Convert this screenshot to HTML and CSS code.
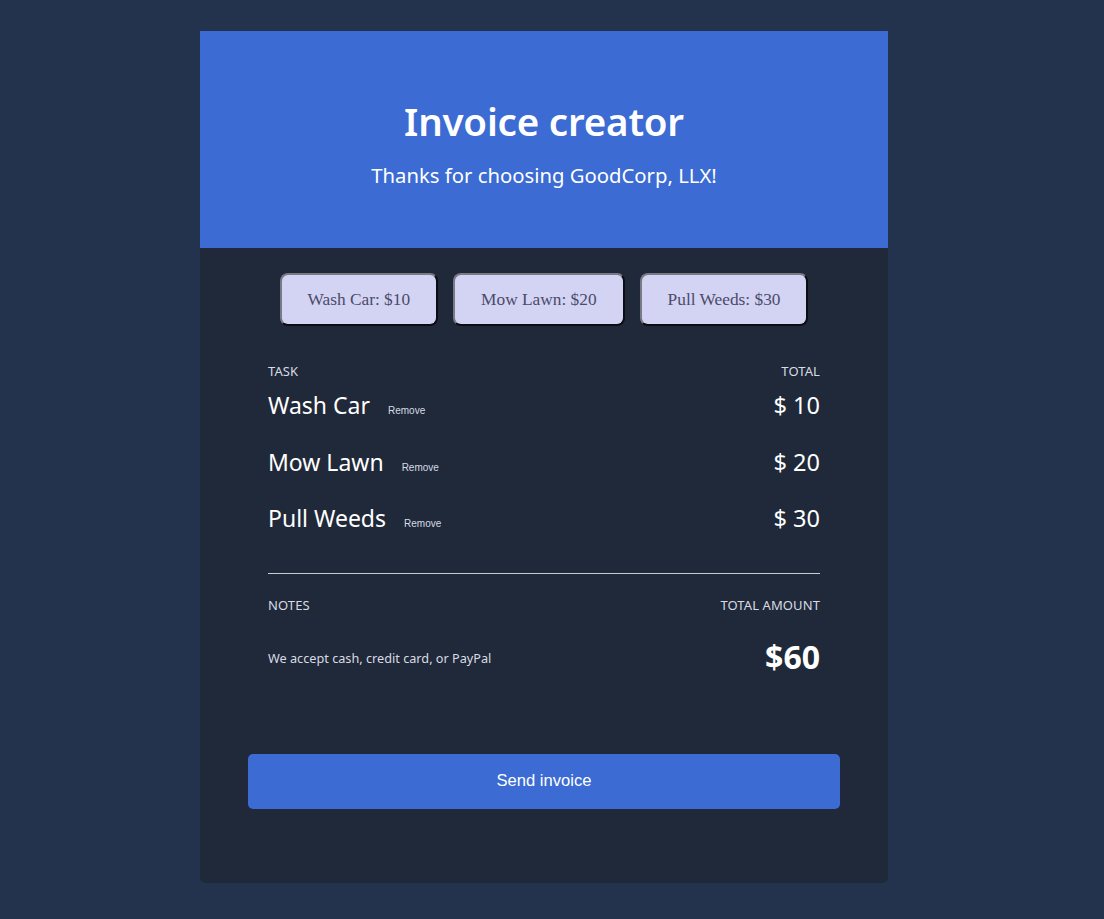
FILE: index.html
```html
<!DOCTYPE html>
<html>
<head>
<meta charset="utf-8">
<link rel="stylesheet" href="styles.css">
</head>
<body>
<div class="card">
  <header class="hero">
    <h1 class="title">Invoice creator</h1>
    <p class="subtitle">Thanks for choosing GoodCorp, LLX!</p>
  </header>
  <main class="content">
    <div class="services">
      <button class="service">Wash Car: $10</button>
      <button class="service">Mow Lawn: $20</button>
      <button class="service">Pull Weeds: $30</button>
    </div>
    <div class="table">
      <div class="head-row">
        <span class="label">TASK</span>
        <span class="label">TOTAL</span>
      </div>
      <div class="items">
        <div class="item">
          <div class="item-name"><span class="task">Wash Car</span><span class="remove">Remove</span></div>
          <span class="price">$ 10</span>
        </div>
        <div class="item">
          <div class="item-name"><span class="task">Mow Lawn</span><span class="remove">Remove</span></div>
          <span class="price">$ 20</span>
        </div>
        <div class="item">
          <div class="item-name"><span class="task">Pull Weeds</span><span class="remove">Remove</span></div>
          <span class="price">$ 30</span>
        </div>
      </div>
      <hr class="divider">
      <div class="summary">
        <div class="summary-col">
          <span class="label">NOTES</span>
          <span class="notes">We accept cash, credit card, or PayPal</span>
        </div>
        <div class="summary-col right">
          <span class="label">TOTAL AMOUNT</span>
          <span class="amount">$60</span>
        </div>
      </div>
    </div>
    <button class="send">Send invoice</button>
  </main>
</div>
</body>
</html>
```
FILE: styles.css
```css
html, body {
  margin: 0;
  padding: 0;
}
body {
  background: #23334d;
  font-family: "Noto Sans", "Open Sans", sans-serif;
  color: #ffffff;
  padding: 31px 16px 0 0;
  min-height: 919px;
  box-sizing: border-box;
}
.card {
  width: 688px;
  margin: 0 auto;
  background: #202939;
  border-radius: 0 0 6px 6px;
  overflow: hidden;
}
.hero {
  background: #3b6bd3;
  height: 217px;
  box-sizing: border-box;
  padding-top: 63px;
  text-align: center;
}
.title {
  margin: 0;
  font-size: 38.5px;
  font-weight: 600;
  line-height: 54px;
  letter-spacing: -0.2px;
}
.subtitle {
  margin: 13px 0 0;
  font-size: 20.3px;
  line-height: 28px;
}
.content {
  padding: 25px 48px 74px;
}
.services {
  display: flex;
  justify-content: center;
  gap: 15px;
}
.service {
  font-family: "Liberation Serif", "Times New Roman", serif;
  font-size: 17.33px;
  color: #4b4b6a;
  background: #d3d3f3;
  border: 2px solid;
  border-color: #7a7a86 #0c0c12 #0c0c12 #7a7a86;
  border-radius: 8px;
  height: 53px;
  padding: 0 26px;
}
.table {
  margin: 37px 20px 0;
}
.head-row {
  display: flex;
  justify-content: space-between;
}
.label {
  font-size: 13px;
  color: #d8dbe4;
  line-height: 16px;
  letter-spacing: 0.1px;
}
.items {
  margin-top: 8px;
}
.item {
  display: flex;
  justify-content: space-between;
  align-items: baseline;
  height: 56.5px;
}
.item-name {
  display: flex;
  align-items: baseline;
}
.task {
  font-size: 23px;
  line-height: 36px;
}
.remove {
  font-family: "Liberation Sans", Arial, sans-serif;
  font-size: 10px;
  color: #d6dbe6;
  margin-left: 18px;
}
.price {
  font-size: 23.5px;
  line-height: 36px;
}
.divider {
  border: 0;
  border-top: 1px solid #c9ccd4;
  margin: 16px 0 0;
}
.summary {
  display: flex;
  justify-content: space-between;
  margin-top: 23px;
}
.summary-col {
  display: flex;
  flex-direction: column;
}
.summary-col.right {
  align-items: flex-end;
}
.notes {
  font-size: 12.7px;
  line-height: 18px;
  color: #d8dbe4;
  margin-top: 36px;
}
.amount {
  font-size: 32px;
  font-weight: 700;
  line-height: 40px;
  margin-top: 24px;
}
.send {
  display: block;
  width: 100%;
  height: 55px;
  margin-top: 77px;
  background: #3b6bd3;
  color: #ffffff;
  border: 0;
  border-radius: 5px;
  font-family: "Liberation Sans", Arial, sans-serif;
  font-size: 16.6px;
}
```
